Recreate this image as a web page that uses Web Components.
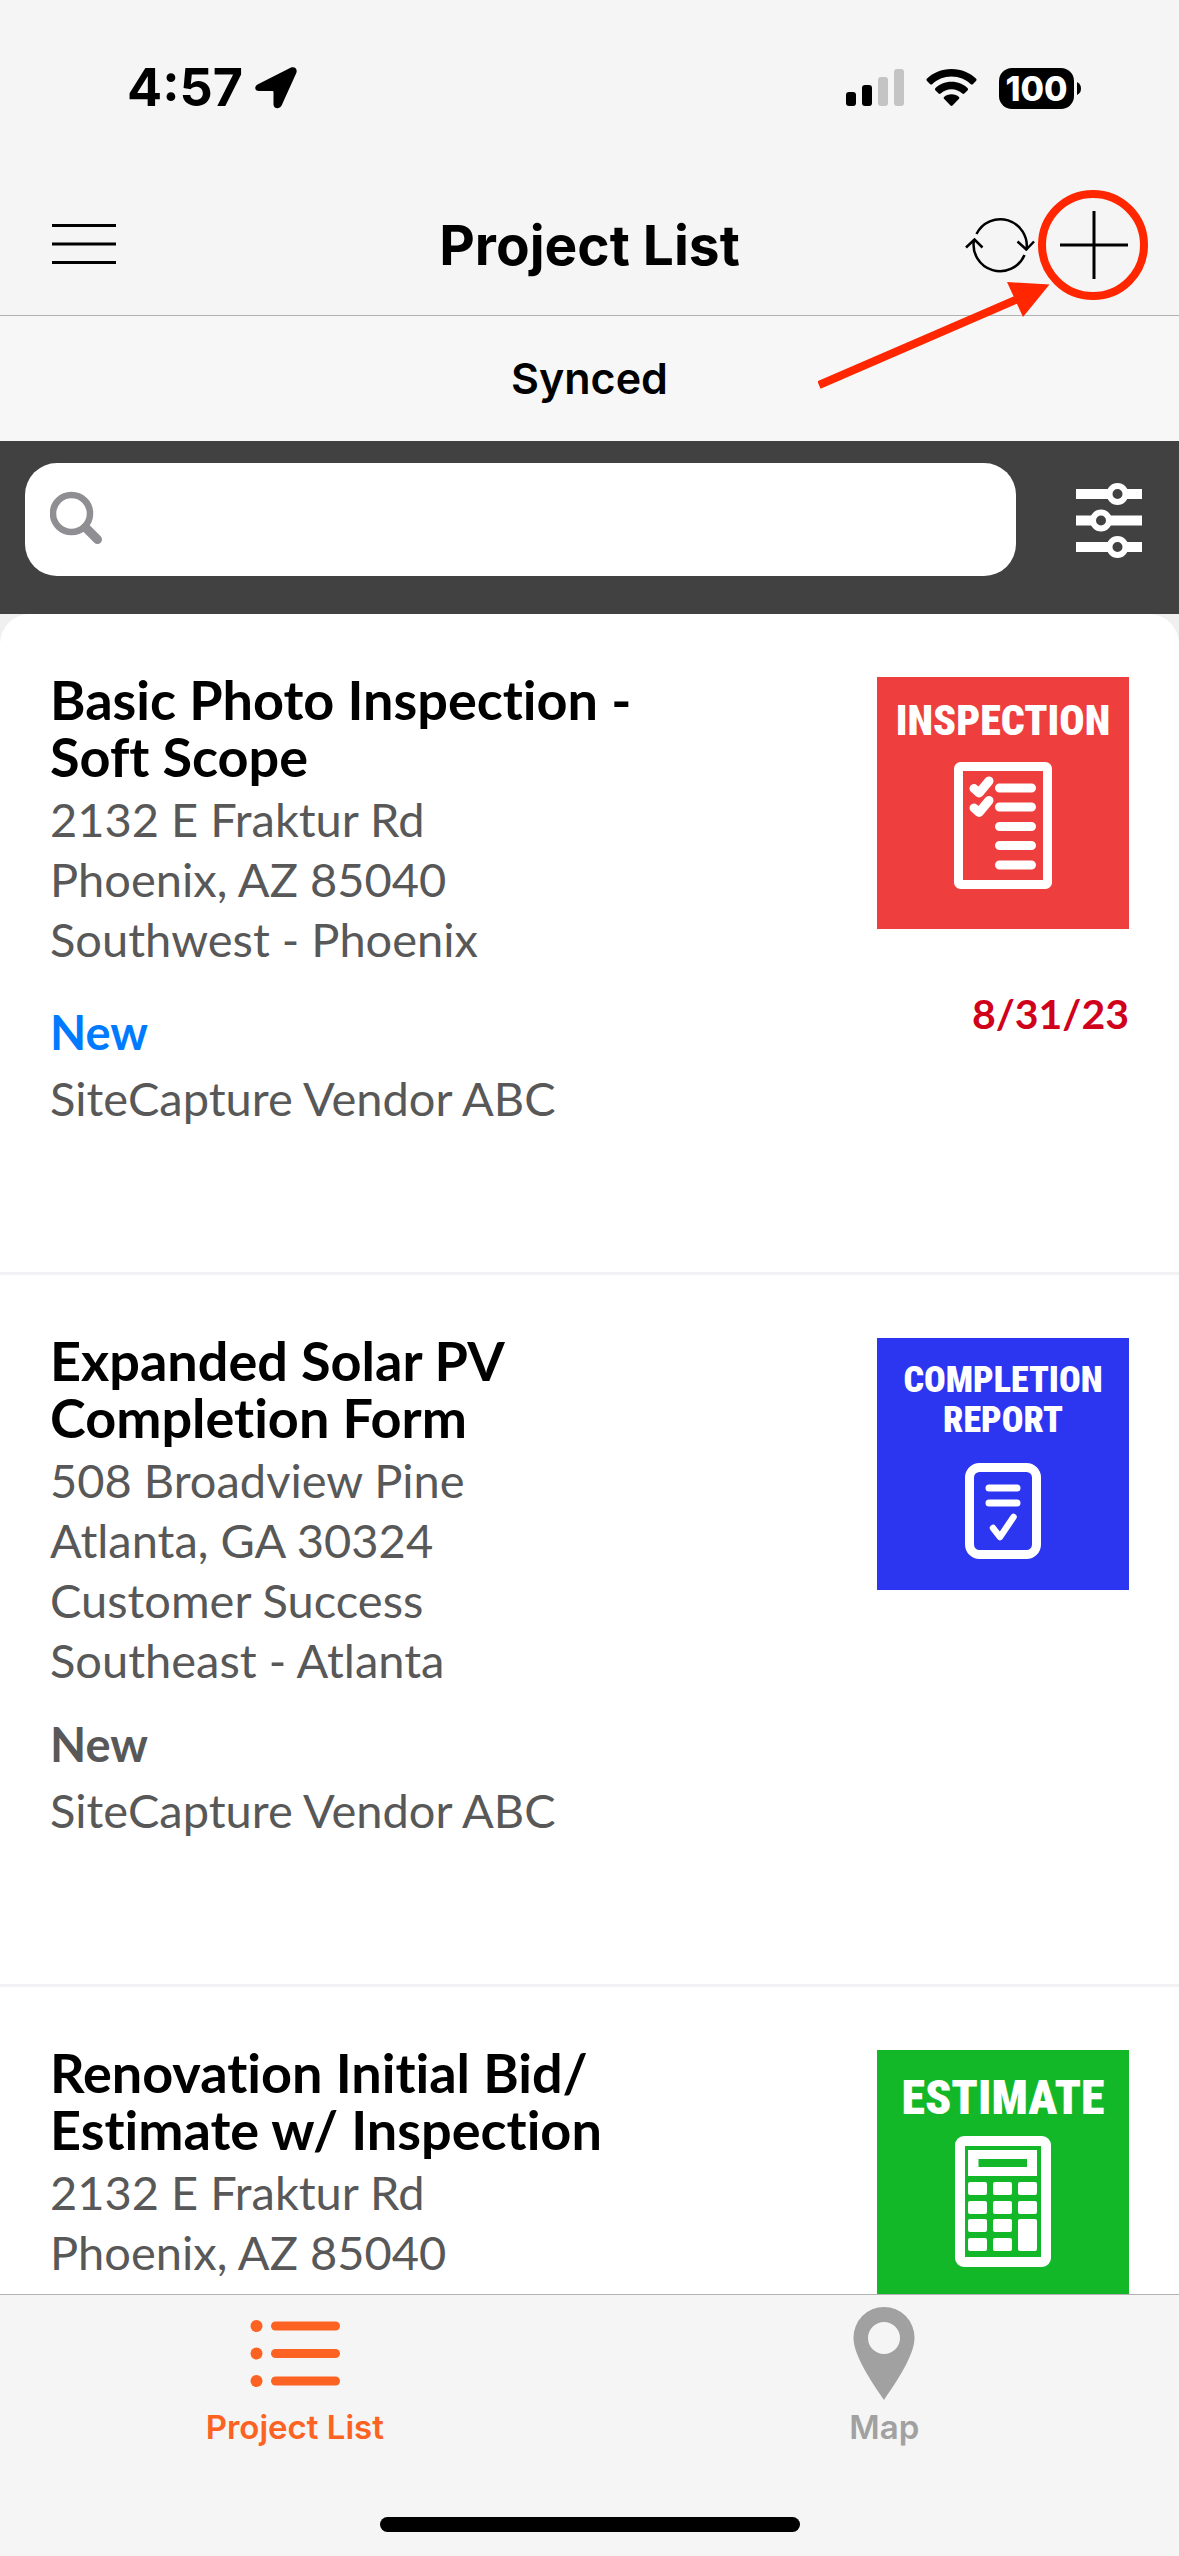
<!DOCTYPE html>
<html lang="en">
<head>
<meta charset="utf-8">
<meta name="viewport" content="width=device-width, initial-scale=1">
<title>Project List</title>
<style>
  html, body { margin: 0; height: 100%; }
  body { font-family: Inter, "Liberation Sans", sans-serif; color: #000; background: #f5f5f5; }
</style>
</head>
<body>
<project-app></project-app>

<script>
const define = (name, html, setup) => {
  const template = document.createElement('template');
  template.innerHTML = html;
  customElements.define(name, class extends HTMLElement {
    connectedCallback() {
      if (this.shadowRoot) return;
      this.attachShadow({ mode: 'open' }).append(template.content.cloneNode(true));
      if (setup) setup(this, this.shadowRoot);
    }
  });
};

/* Phone status bar: clock, location, signal, wifi, battery */
define('status-bar', `
  <style>
    :host { display: flex; align-items: center; justify-content: space-between; height: 176px; padding: 0 98px 0 127px; }
    .left { display: flex; align-items: center; gap: 12px; }
    .right { display: flex; align-items: center; gap: 22px; }
    time { font-size: 52px; line-height: 60px; font-weight: 700; }
    svg { display: block; }
    .battery { display: flex; align-items: center; gap: 3px; }
    .level { width: 75px; height: 41px; border-radius: 13px; background: #000; color: #fff; font-size: 34px; line-height: 41px; font-weight: 800; text-align: center; }
  </style>
  <div class="left">
    <time>4:57</time>
    <svg width="42" height="42" viewBox="0 0 42 42" aria-hidden="true"><path d="M36 .6 3 17.200C-1.500 19.600 0 24 4 24H17.500Q18.500 24 18.500 25V37.500C18.500 42 24.500 42.500 26.600 38.500L41.300 6C42.800 2.200 39.800-1 36 .6Z"/></svg>
  </div>
  <div class="right">
    <svg width="58" height="38" viewBox="0 0 58 38" aria-label="Signal"><rect y="23" width="10" height="14" rx="3"/><rect x="16" y="16" width="10" height="21" rx="3"/><g fill="#c4c4c4"><rect x="32" y="8" width="10" height="29" rx="3"/><rect x="48" width="10" height="37" rx="3"/></g></svg>
    <svg width="51" height="38" viewBox="0 0 51 38" aria-label="Wi-Fi"><path d="M25.500 0C15.500 0 6.500 4 .8 9.800Q0 10.800.8 11.800L4.200 15.200Q5.200 16 6.200 15.200C11 10.600 18 7.500 25.500 7.500S40 10.600 44.800 15.200Q45.800 16 46.800 15.200L50.200 11.800Q51 10.800 50.200 9.800C44.500 4 35.500 0 25.500 0ZM25.500 12.700C19 12.700 13.300 15.200 9.300 19.200Q8.500 20.200 9.300 21.200L12.600 24.500Q13.700 25.300 14.700 24.500C17.500 21.800 21.200 20.200 25.500 20.200S33.500 21.800 36.300 24.500Q37.300 25.300 38.400 24.500L41.700 21.200Q42.500 20.200 41.700 19.200C37.700 15.200 32 12.700 25.500 12.700ZM25.500 25.300C22.500 25.300 20 26.300 18 28Q17.200 28.900 18 29.800L24.500 36.500Q25.500 37.400 26.500 36.500L33 29.800Q33.800 28.900 33 28C31 26.300 28.500 25.300 25.500 25.300Z"/></svg>
    <div class="battery">
      <span class="level">100</span>
      <svg width="4" height="13" viewBox="0 0 4 13" aria-hidden="true"><path d="M0 0Q4 2 4 6.500T0 13Z"/></svg>
    </div>
  </div>`);

define('nav-bar', `
  <style>
    :host { display: grid; grid-template-columns: 1fr auto 1fr; align-items: center; height: 137px; padding: 0 51px 2px; border-bottom: 1px solid #b2b2b2; }
    h1 { margin: 0; font-size: 55px; line-height: 60px; font-weight: 700; }
    button { display: block; border: 0; padding: 0; background: none; }
    svg { display: block; fill: none; stroke: #000; stroke-width: 3; }
    .actions { display: flex; align-items: center; justify-content: flex-end; gap: 25px; }
  </style>
  <button type="button" aria-label="Menu"><svg width="66" height="42" viewBox="0 0 66 42"><path d="M1 1.500H65M1 20H65M1 38.500H65"/></svg></button>
  <h1><slot></slot></h1>
  <div class="actions">
    <button type="button" aria-label="Refresh"><svg width="70" height="70" viewBox="0 0 70 70"><g stroke-width="2.500"><path d="M11.500 24A26.500 26.500 0 0 1 61.500 39.500M59.500 45A26.500 26.500 0 0 1 9 30"/><path d="M52.500 31.500 61.300 39.500 69 31.500M1 37.500 9.500 29.500 17.500 37.500"/></g></svg></button>
    <button type="button" aria-label="Add project"><svg width="68" height="68" viewBox="0 0 68 68"><path d="M34 0V68M0 34H68"/></svg></button>
  </div>`);

/* Red ring and arrow drawn over the add button */
define('add-callout', `
  <style>
    :host { position: absolute; top: 184px; right: 25px; pointer-events: none; }
    svg { display: block; }
  </style>
  <svg width="336" height="212" viewBox="0 0 336 212" aria-hidden="true">
    <circle cx="275" cy="61" r="51" fill="none" stroke="#ff2600" stroke-width="8"/>
    <path d="M1 201 202 114" stroke="#ff2600" stroke-width="8"/>
    <path d="M189 98 231.500 100.500 205 133Z" fill="#ff2600"/>
  </svg>`);

define('sync-banner', `
  <style>
    :host { display: flex; align-items: center; justify-content: center; height: 123px; padding-bottom: 2px; background: #f7f7f7; font-size: 43px; line-height: 52px; font-weight: 600; }
  </style>
  <span role="status"><slot></slot></span>`);

define('search-bar', `
  <style>
    :host { display: flex; align-items: flex-start; justify-content: space-between; gap: 60px; padding: 22px 37px 38px 25px; background: #414141; }
    label { flex: 1; display: flex; align-items: center; gap: 18px; height: 113px; padding: 0 25px; border-radius: 32px; background: #fff; box-sizing: border-box; }
    input { flex: 1; min-width: 0; border: 0; outline: 0; padding: 0; background: none; font: 42px/52px Inter, sans-serif; }
    button { display: flex; align-items: center; height: 113px; border: 0; padding: 0; background: none; }
    svg { display: block; }
  </style>
  <label>
    <svg width="53" height="57" viewBox="0 0 53 57" fill="none" stroke="#8e8e93" aria-hidden="true"><circle cx="21.500" cy="22.500" r="18.500" stroke-width="6.500"/><path d="M35.500 36.500 47.500 48.500" stroke-width="9" stroke-linecap="round"/></svg>
    <input type="text" aria-label="Search projects">
  </label>
  <button type="button" aria-label="Filter">
    <svg width="66" height="76" viewBox="0 0 66 76"><g stroke="#fff" stroke-width="10"><path d="M0 12H66M0 38.500H66M0 65H66"/></g><g fill="#414141" stroke="#fff" stroke-width="6"><circle cx="41.500" cy="12" r="8"/><circle cx="25" cy="38.500" r="8"/><circle cx="41.500" cy="65" r="8"/></g></svg>
  </button>`);

const TILES = {
  inspection: {
    color: '#ee3e3e', text: 'INSPECTION', size: 42, line: 50, top: 19, gap: 16,
    icon: `<svg width="98" height="127" viewBox="0 0 98 127"><rect x="4.500" y="4.500" width="89" height="118" rx="2" fill="none" stroke="#fff" stroke-width="9"/><g fill="none" stroke="#fff" stroke-linecap="round"><path stroke-width="9" d="M45.500 26H77.500M45.500 45H77.500M45.500 64.500H77.500M45.500 83.500H77.500M45.500 103H77.500"/><path stroke-width="9" stroke-linejoin="round" d="M20 26.500 25 31 35 19M20 46 25 50.500 35 38.500"/></g></svg>`
  },
  completion: {
    color: '#2c35ef', text: 'COMPLETION REPORT', size: 36, line: 40, top: 22, gap: 23,
    icon: `<svg width="76" height="96" viewBox="0 0 76 96" fill="none" stroke="#fff"><rect x="4.500" y="4.500" width="67" height="87" rx="10" stroke-width="9"/><g stroke-linecap="round" stroke-width="7"><path d="M24 25H52M24 40H52"/><path stroke-width="6.500" stroke-linejoin="round" d="M28 65 35 74 48.500 54"/></g></svg>`
  },
  estimate: {
    color: '#13b829', text: 'ESTIMATE', size: 48, line: 50, top: 23, gap: 13,
    icon: `<svg width="96" height="131" viewBox="0 0 96 131"><rect x="5" y="5" width="86" height="121" rx="4" fill="none" stroke="#fff" stroke-width="10"/><g fill="#fff"><path fill-rule="evenodd" d="M13 14H82V40H13ZM23.500 23V31H72V23Z"/><rect x="13" y="46" width="19" height="13" rx="2"/><rect x="38" y="46" width="19" height="13" rx="2"/><rect x="63" y="46" width="19" height="13" rx="2"/><rect x="13" y="65" width="19" height="13" rx="2"/><rect x="38" y="65" width="19" height="13" rx="2"/><rect x="63" y="65" width="19" height="13" rx="2"/><rect x="13" y="83" width="19" height="13" rx="2"/><rect x="38" y="83" width="19" height="13" rx="2"/><rect x="13" y="102" width="19" height="13" rx="2"/><rect x="38" y="102" width="19" height="13" rx="2"/><rect x="63" y="83" width="19" height="32" rx="2"/></g></svg>`
  }
};

define('type-tile', `
  <style>
    :host { display: flex; flex-direction: column; align-items: center; width: 252px; height: 252px; box-sizing: border-box; color: #fff; }
    .name { max-width: 232px; text-align: center; font-family: "Roboto Condensed", Roboto, "Liberation Sans", sans-serif; font-weight: 900; }
    svg { display: block; }
  </style>
  <span class="name"></span>`, (host, root) => {
  const tile = TILES[host.getAttribute('type')];
  const name = root.querySelector('.name');
  host.style.background = tile.color;
  host.style.paddingTop = tile.top + 'px';
  host.style.gap = tile.gap + 'px';
  name.style.fontSize = tile.size + 'px';
  name.style.lineHeight = tile.line + 'px';
  name.textContent = tile.text;
  name.insertAdjacentHTML('afterend', tile.icon);
});

define('project-card', `
  <style>
    :host { display: flex; justify-content: space-between; padding: 57px 50px 144px; border-bottom: 3px solid #f2f2f4; font-family: Lato, "Open Sans", sans-serif; font-size: 47px; line-height: 60px; color: #585858; font-variant-ligatures: none; }
    .info { max-width: 640px; }
    h2 { margin: 0 0 4px; font-size: 54px; line-height: 57px; font-weight: 700; color: #000; }
    address { font-style: normal; white-space: pre-line; }
    .status { margin: 24px 0 6px; font-weight: 700; }
    :host([due]) .status { margin-top: 33px; color: #007aff; }
    p { margin: 0; }
    .side { display: flex; flex-direction: column; align-items: flex-end; gap: 55px; padding-top: 6px; }
    time { color: #d0021b; font-size: 41px; font-weight: 700; }
  </style>
  <div class="info">
    <h2></h2>
    <address></address>
  </div>
  <div class="side"></div>`, (host, root) => {
  const add = (parent, tag, text) => {
    const node = document.createElement(tag);
    node.textContent = text;
    root.querySelector(parent).append(node);
    return node;
  };
  root.querySelector('h2').textContent = host.getAttribute('name');
  root.querySelector('address').textContent = host.getAttribute('address').split('|').join('\n');
  if (host.hasAttribute('status')) add('.info', 'p', host.getAttribute('status')).className = 'status';
  if (host.hasAttribute('vendor')) add('.info', 'p', host.getAttribute('vendor'));
  const tile = document.createElement('type-tile');
  tile.setAttribute('type', host.getAttribute('type'));
  root.querySelector('.side').append(tile);
  if (host.hasAttribute('due')) add('.side', 'time', host.getAttribute('due'));
});

define('tab-item', `
  <style>
    :host { flex: 1; display: block; }
    a { display: flex; flex-direction: column; align-items: center; color: #a1a1a1; text-decoration: none; font-size: 33px; line-height: 32px; font-weight: 600; }
    a[aria-current] { color: #fc6222; }
    .icon { display: flex; align-items: center; justify-content: center; height: 116px; }
  </style>
  <a href="#"><span class="icon"><slot name="icon"></slot></span><slot></slot></a>`, (host, root) => {
  if (host.hasAttribute('active')) root.querySelector('a').setAttribute('aria-current', 'page');
});

define('tab-bar', `
  <style>
    :host { display: flex; flex-direction: column; height: 262px; box-sizing: border-box; border-top: 1px solid #b2b2b2; background: #f5f5f5; }
    nav { display: flex; flex: 1; }
    .home { align-self: center; width: 420px; height: 15px; margin-bottom: 24px; border-radius: 8px; background: #000; }
    svg { display: block; }
  </style>
  <nav>
    <tab-item active><svg slot="icon" width="90" height="67" viewBox="0 0 90 67" fill="#fc6222"><circle cx="6.500" cy="6" r="6"/><circle cx="6.500" cy="33.500" r="6"/><circle cx="6.500" cy="61" r="6"/><rect x="21" y="1.500" width="69" height="9" rx="4.500"/><rect x="21" y="29" width="69" height="9" rx="4.500"/><rect x="21" y="56.500" width="69" height="9" rx="4.500"/></svg>Project List</tab-item>
    <tab-item><svg slot="icon" width="62" height="93" viewBox="0 0 62 93"><path fill="#a1a1a1" fill-rule="evenodd" d="M31 0A30.500 30.500 0 0 1 61.500 31C61.500 48 44 74 31 93C18 74 .5 48 .5 31A30.500 30.500 0 0 1 31 0ZM31 15A16 16 0 1 0 31 47A16 16 0 1 0 31 15Z"/></svg>Map</tab-item>
  </nav>
  <div class="home"></div>`);

define('project-app', `
  <style>
    :host { position: relative; display: flex; flex-direction: column; height: 100vh; overflow: hidden; }
    header { flex: none; }
    main { flex: 1; min-height: 0; overflow: hidden; background: #f0f0f0; }
    .list { border-radius: 30px 30px 0 0; background: #fff; }
    tab-bar { flex: none; }
  </style>
  <header>
    <status-bar></status-bar>
    <nav-bar>Project List</nav-bar>
    <sync-banner>Synced</sync-banner>
    <search-bar></search-bar>
  </header>
  <main>
    <div class="list">
      <project-card type="inspection" due="8/31/23" name="Basic Photo Inspection - Soft Scope" address="2132 E Fraktur Rd|Phoenix, AZ 85040|Southwest - Phoenix" status="New" vendor="SiteCapture Vendor ABC"></project-card>
      <project-card type="completion" name="Expanded Solar PV Completion Form" address="508 Broadview Pine|Atlanta, GA 30324|Customer Success|Southeast - Atlanta" status="New" vendor="SiteCapture Vendor ABC"></project-card>
      <project-card type="estimate" name="Renovation Initial Bid/ Estimate w/ Inspection" address="2132 E Fraktur Rd|Phoenix, AZ 85040|Southwest - Phoenix"></project-card>
    </div>
  </main>
  <tab-bar></tab-bar>
  <add-callout></add-callout>`);
</script>
</body>
</html>
